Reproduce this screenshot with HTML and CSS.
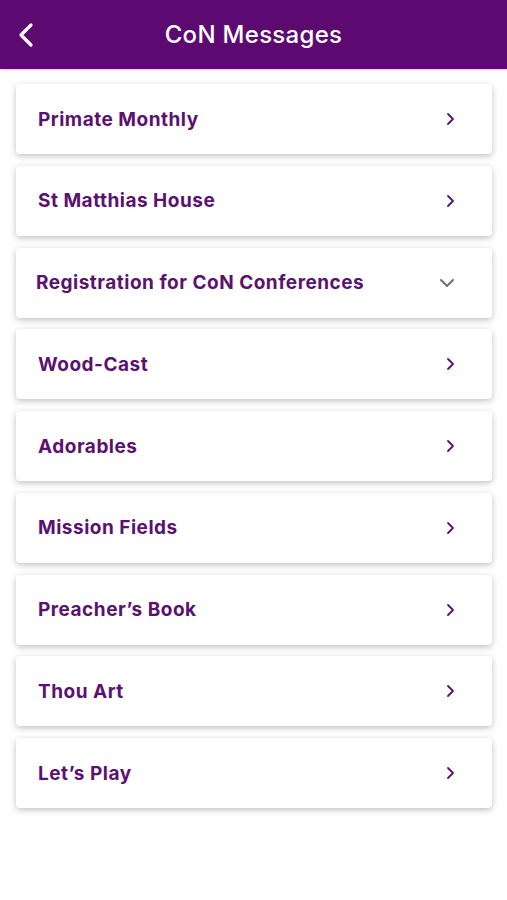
FILE: index.html
```html
<!DOCTYPE html>
<html lang="en">
<head>
  <meta charset="UTF-8" />
  <meta name="viewport" content="width=device-width, initial-scale=1.0"/>
  <title>CoN Messages</title>
  <link rel="stylesheet" href="styles.css">
</head>
<body>
  <header class="top-bar">
    <a class="back-btn" href="#">
      <svg width="16" height="26" viewBox="0 0 16 26"><path d="M13 3 L3 13 L13 23" fill="none" stroke="#fff" stroke-width="3.2" stroke-linecap="round" stroke-linejoin="round"/></svg>
    </a>
    <h1>CoN Messages</h1>
  </header>

  <div class="list">
    <div class="card"><span class="card-title">Primate Monthly</span><svg class="chev" width="10" height="14" viewBox="0 0 10 14"><path d="M3 2 L8 7 L3 12" fill="none" stroke="#5a1270" stroke-width="1.8" stroke-linecap="round" stroke-linejoin="round"/></svg></div>
    <div class="card"><span class="card-title">St Matthias House</span><svg class="chev" width="10" height="14" viewBox="0 0 10 14"><path d="M3 2 L8 7 L3 12" fill="none" stroke="#5a1270" stroke-width="1.8" stroke-linecap="round" stroke-linejoin="round"/></svg></div>
    <div class="card card-open"><span class="card-title">Registration for CoN Conferences</span><svg class="chev-down" width="18" height="12" viewBox="0 0 18 12"><path d="M3 3 L9 9 L15 3" fill="none" stroke="#6d6d6d" stroke-width="2" stroke-linecap="round" stroke-linejoin="round"/></svg></div>
    <div class="card"><span class="card-title">Wood-Cast</span><svg class="chev" width="10" height="14" viewBox="0 0 10 14"><path d="M3 2 L8 7 L3 12" fill="none" stroke="#5a1270" stroke-width="1.8" stroke-linecap="round" stroke-linejoin="round"/></svg></div>
    <div class="card"><span class="card-title">Adorables</span><svg class="chev" width="10" height="14" viewBox="0 0 10 14"><path d="M3 2 L8 7 L3 12" fill="none" stroke="#5a1270" stroke-width="1.8" stroke-linecap="round" stroke-linejoin="round"/></svg></div>
    <div class="card"><span class="card-title">Mission Fields</span><svg class="chev" width="10" height="14" viewBox="0 0 10 14"><path d="M3 2 L8 7 L3 12" fill="none" stroke="#5a1270" stroke-width="1.8" stroke-linecap="round" stroke-linejoin="round"/></svg></div>
    <div class="card"><span class="card-title">Preacher’s Book</span><svg class="chev" width="10" height="14" viewBox="0 0 10 14"><path d="M3 2 L8 7 L3 12" fill="none" stroke="#5a1270" stroke-width="1.8" stroke-linecap="round" stroke-linejoin="round"/></svg></div>
    <div class="card"><span class="card-title">Thou Art</span><svg class="chev" width="10" height="14" viewBox="0 0 10 14"><path d="M3 2 L8 7 L3 12" fill="none" stroke="#5a1270" stroke-width="1.8" stroke-linecap="round" stroke-linejoin="round"/></svg></div>
    <div class="card"><span class="card-title">Let’s Play</span><svg class="chev" width="10" height="14" viewBox="0 0 10 14"><path d="M3 2 L8 7 L3 12" fill="none" stroke="#5a1270" stroke-width="1.8" stroke-linecap="round" stroke-linejoin="round"/></svg></div>
  </div>
</body>
</html>
```

FILE: styles.css
```css
body {
  font-family: Inter, 'Noto Sans', sans-serif;
  background: #ffffff;
  margin: 0;
  padding: 0;
}
.top-bar {
  height: 69px;
  background: #5c0a72;
  display: flex;
  align-items: center;
  justify-content: center;
  position: relative;
  box-shadow: 0 1px 2px rgba(0, 0, 0, 0.2);
}
.top-bar h1 {
  margin: 0;
  color: #ffffff;
  font-size: 24px;
  font-weight: 500;
  letter-spacing: 0.3px;
}
.back-btn {
  position: absolute;
  left: 18px;
  top: 22px;
  display: block;
}
.list {
  padding: 15px 15px 30px 16px;
  display: flex;
  flex-direction: column;
  gap: 11.75px;
}
.card {
  height: 70px;
  background: #ffffff;
  border-radius: 4px;
  box-shadow: 0 2px 6px rgba(0, 0, 0, 0.25);
  display: flex;
  align-items: center;
  justify-content: space-between;
  padding: 0 37px 0 22px;
}
.card-title {
  color: #5a1270;
  font-size: 19px;
  font-weight: 700;
  letter-spacing: 0.5px;
}
.card-open {
  padding: 0 36px 0 20px;
}
.chev {
  display: block;
}
```
